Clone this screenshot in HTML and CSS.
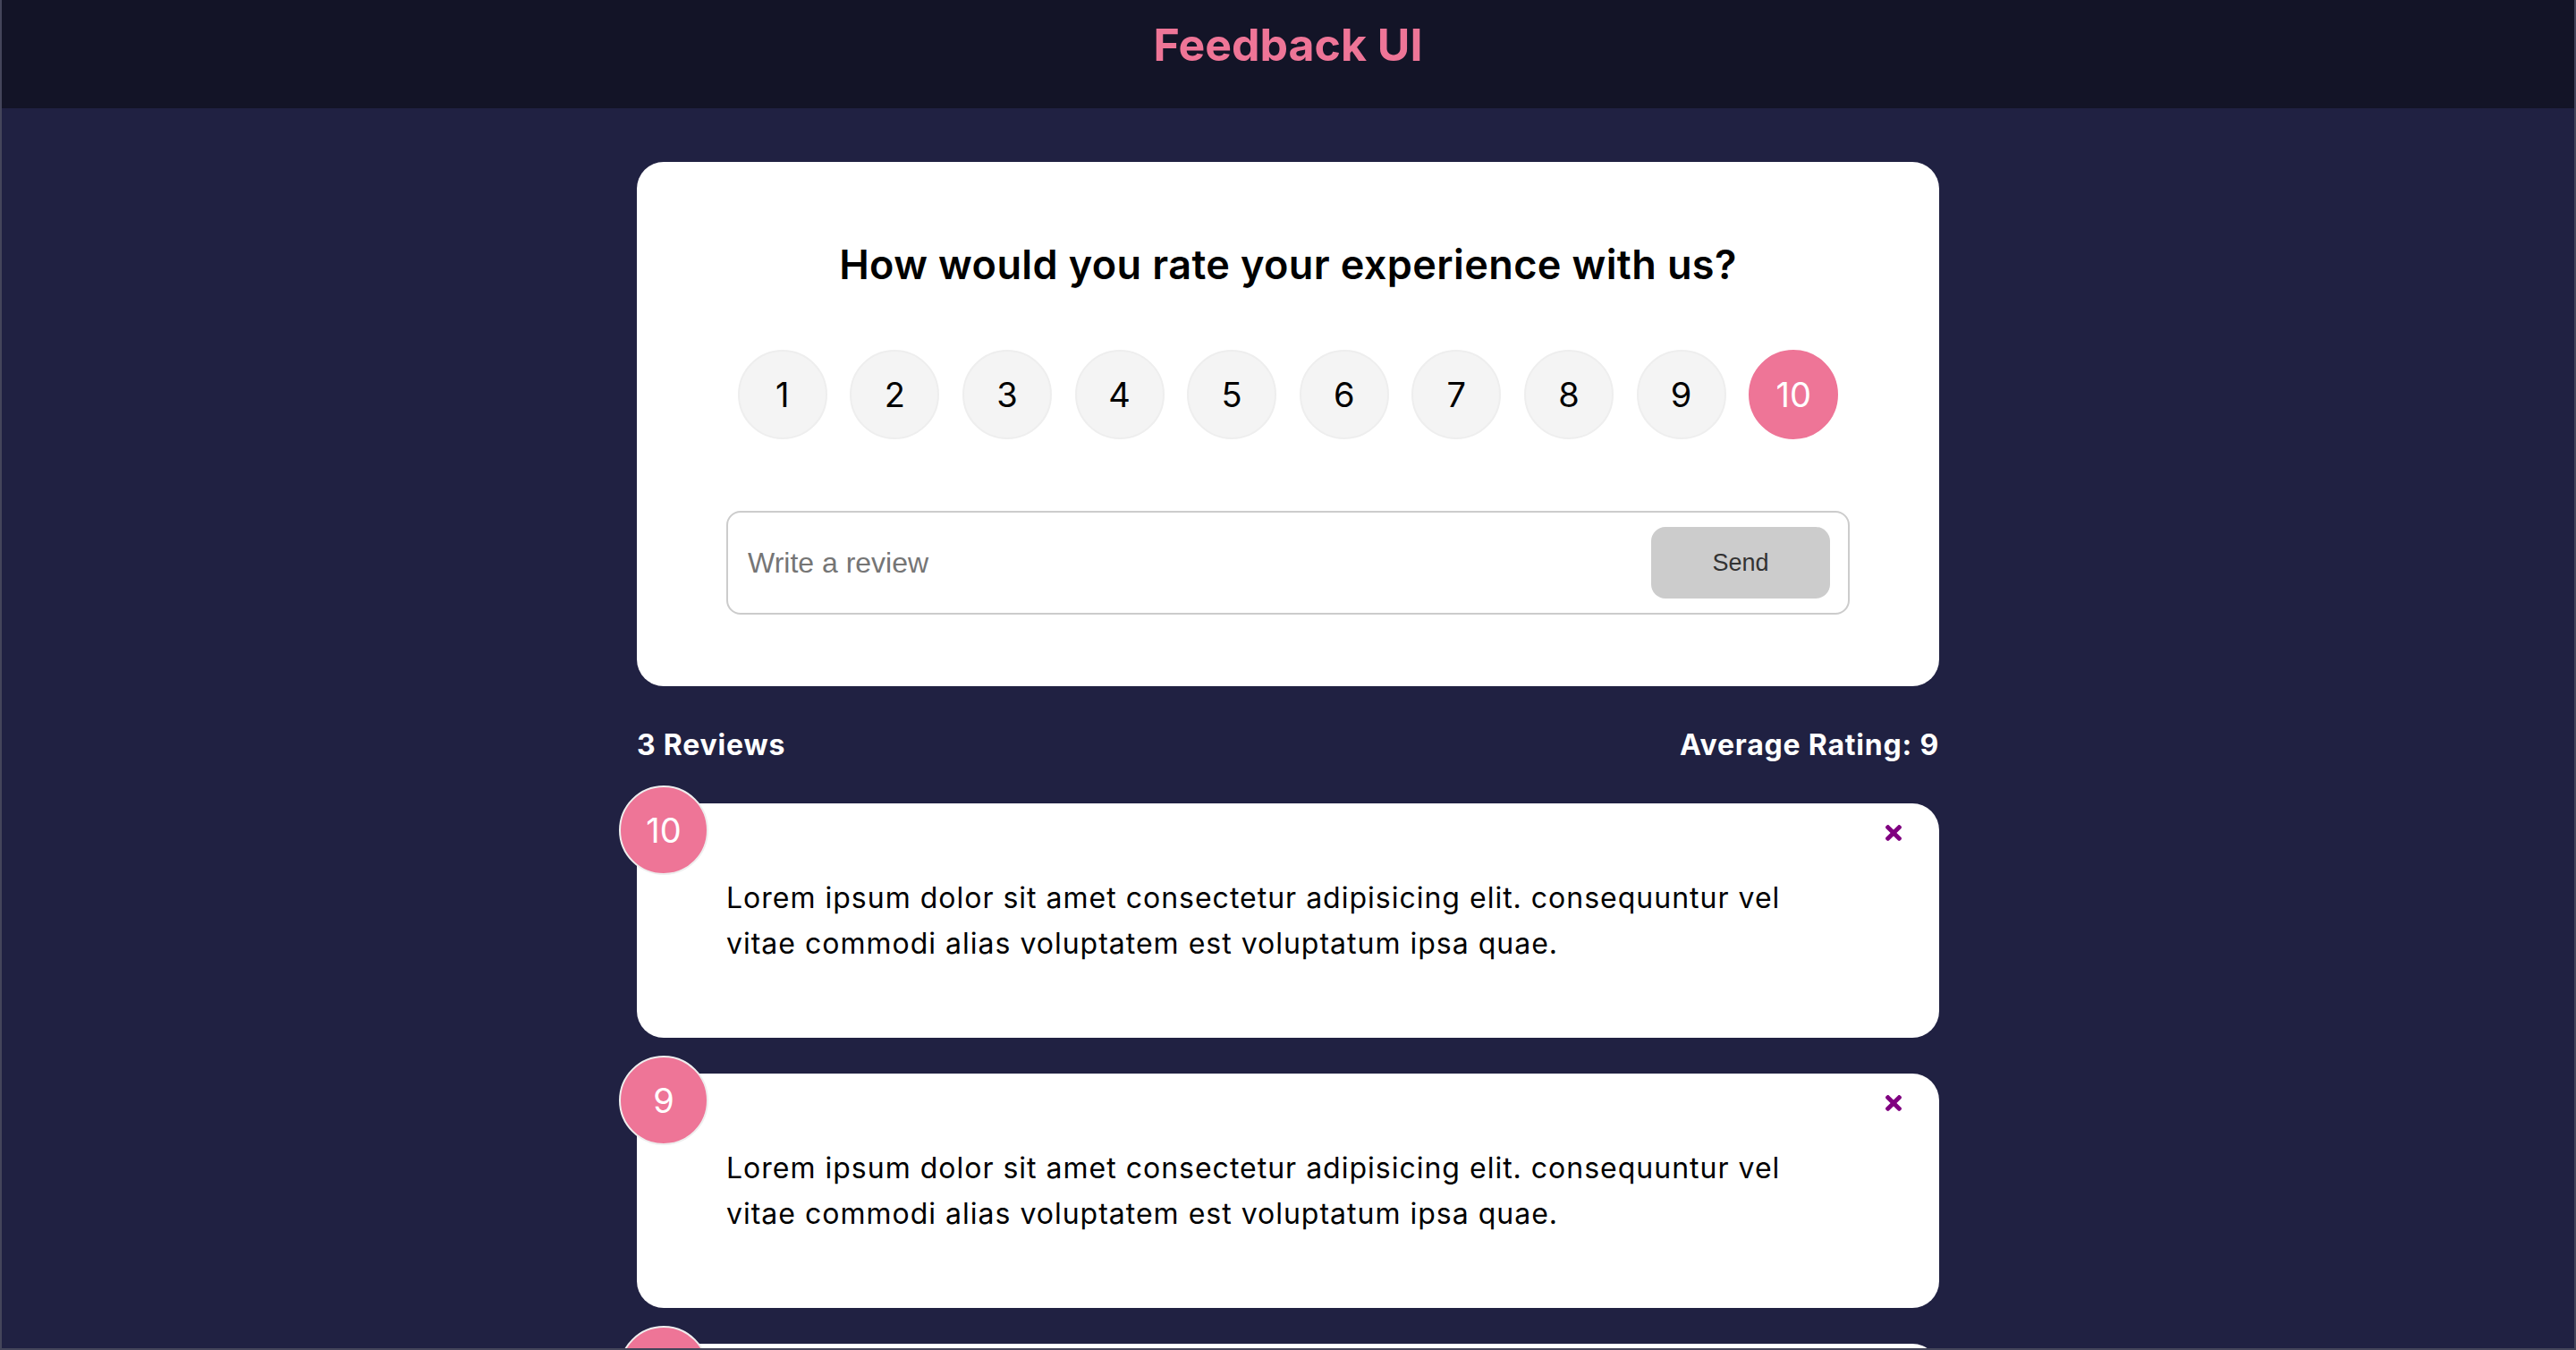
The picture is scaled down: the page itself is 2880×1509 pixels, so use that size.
FILE: index.html
```html
<!DOCTYPE html>
<html lang="en">
<head>
    <meta charset="UTF-8">
    <meta name="viewport" content="width=device-width, initial-scale=1.0">
    <title>Feedback UI</title>
    <link rel="stylesheet" href="styles.css">
</head>
<body>
    <div class="frame">
        <header class="topbar">
            <h2>Feedback UI</h2>
        </header>

        <main class="container">
            <!-- Rating form -->
            <div class="card">
                <form>
                    <h2 class="prompt">How would you rate your experience with us?</h2>
                    <ul class="rating">
                        <li>1</li>
                        <li>2</li>
                        <li>3</li>
                        <li>4</li>
                        <li>5</li>
                        <li>6</li>
                        <li>7</li>
                        <li>8</li>
                        <li>9</li>
                        <li class="selected">10</li>
                    </ul>
                    <div class="input-group">
                        <input type="text" placeholder="Write a review">
                        <button type="submit" class="btn" disabled>Send</button>
                    </div>
                </form>
            </div>

            <div class="stats">
                <h4>3 Reviews</h4>
                <h4>Average Rating: 9</h4>
            </div>

            <!-- Feedback list -->
            <div class="card review">
                <div class="num">10</div>
                <button class="close"><svg viewBox="0 80 352 352"><path d="M242.72 256l100.07-100.07c12.28-12.28 12.28-32.19 0-44.48l-22.24-22.24c-12.28-12.28-32.19-12.28-44.48 0L176 189.28 75.93 89.21c-12.28-12.28-32.19-12.28-44.48 0L9.21 111.45c-12.28 12.28-12.28 32.19 0 44.48L109.28 256 9.21 356.07c-12.28 12.28-12.28 32.19 0 44.48l22.24 22.24c12.28 12.28 32.2 12.28 44.48 0L176 322.72l100.07 100.07c12.28 12.28 32.2 12.28 44.48 0l22.24-22.24c12.28-12.28 12.28-32.19 0-44.48L242.72 256z"/></svg></button>
                <div class="text">Lorem ipsum dolor sit amet consectetur adipisicing elit. consequuntur vel vitae commodi alias voluptatem est voluptatum ipsa quae.</div>
            </div>
            <div class="card review">
                <div class="num">9</div>
                <button class="close"><svg viewBox="0 80 352 352"><path d="M242.72 256l100.07-100.07c12.28-12.28 12.28-32.19 0-44.48l-22.24-22.24c-12.28-12.28-32.19-12.28-44.48 0L176 189.28 75.93 89.21c-12.28-12.28-32.19-12.28-44.48 0L9.21 111.45c-12.28 12.28-12.28 32.19 0 44.48L109.28 256 9.21 356.07c-12.28 12.28-12.28 32.19 0 44.48l22.24 22.24c12.28 12.28 32.2 12.28 44.48 0L176 322.72l100.07 100.07c12.28 12.28 32.2 12.28 44.48 0l22.24-22.24c12.28-12.28 12.28-32.19 0-44.48L242.72 256z"/></svg></button>
                <div class="text">Lorem ipsum dolor sit amet consectetur adipisicing elit. consequuntur vel vitae commodi alias voluptatem est voluptatum ipsa quae.</div>
            </div>
            <div class="card review">
                <div class="num">8</div>
                <button class="close"><svg viewBox="0 80 352 352"><path d="M242.72 256l100.07-100.07c12.28-12.28 12.28-32.19 0-44.48l-22.24-22.24c-12.28-12.28-32.19-12.28-44.48 0L176 189.28 75.93 89.21c-12.28-12.28-32.19-12.28-44.48 0L9.21 111.45c-12.28 12.28-12.28 32.19 0 44.48L109.28 256 9.21 356.07c-12.28 12.28-12.28 32.19 0 44.48l22.24 22.24c12.28 12.28 32.2 12.28 44.48 0L176 322.72l100.07 100.07c12.28 12.28 32.2 12.28 44.48 0l22.24-22.24c12.28-12.28 12.28-32.19 0-44.48L242.72 256z"/></svg></button>
                <div class="text">Lorem ipsum dolor sit amet consectetur adipisicing elit. consequuntur vel vitae commodi alias voluptatem est voluptatum ipsa quae.</div>
            </div>
        </main>
    </div>
</body>
</html>
```

FILE: styles.css
```css
* {
    box-sizing: border-box;
}
body {
    margin: 0;
    font-family: Inter, "Noto Sans", sans-serif;
    background-color: #202142;
    color: #fff;
    line-height: 1.6;
}
.frame {
    height: 100vh;
    overflow: hidden;
    border: 2px solid #44455a;
    border-top: 0;
}
.topbar {
    height: 121px;
    background-color: #131427;
    text-align: center;
}
.topbar h2 {
    margin: 0;
    line-height: 100px;
    font-size: 50px;
    font-weight: 700;
    color: #ee7597;
}
.container {
    max-width: 1536px;
    margin: 0 auto;
    padding: 20px 40px 0;
}
.card {
    position: relative;
    background-color: #fff;
    color: #000;
    border-radius: 30px;
    padding: 80px 100px;
    margin: 40px 0;
}
.prompt {
    margin: 0;
    text-align: center;
    font-size: 45px;
    font-weight: 600;
    letter-spacing: 0.4px;
    line-height: 70px;
}
.rating {
    display: flex;
    align-items: center;
    justify-content: space-around;
    list-style: none;
    padding: 0;
    margin: 60px 0 80px;
}
.rating li {
    width: 100px;
    height: 100px;
    border-radius: 50%;
    background: #f4f4f4;
    border: 2px solid #eee;
    font-size: 38px;
    display: flex;
    align-items: center;
    justify-content: center;
}
.rating li.selected {
    background: #ee7597;
    border-color: #ee7597;
    color: #fff;
}
.input-group {
    display: flex;
    align-items: center;
    border: 2px solid #ccc;
    border-radius: 16px;
    padding: 16px 20px;
}
.input-group input {
    flex-grow: 1;
    border: none;
    outline: none;
    font-family: "Liberation Sans", Arial, sans-serif;
    font-size: 32px;
    padding: 1px 2px;
}
.input-group input::placeholder {
    color: #757575;
}
.btn {
    width: 200px;
    height: 80px;
    border: 0;
    border-radius: 16px;
    background-color: #ccc;
    color: #333;
    font-family: "Liberation Sans", Arial, sans-serif;
    font-size: 27px;
}
.stats {
    display: flex;
    justify-content: space-between;
    align-items: center;
    margin-top: 2px;
}
.stats h4 {
    margin: 0;
    font-size: 32px;
    font-weight: 700;
    letter-spacing: 0.8px;
    line-height: 51px;
}
.review .text {
    font-size: 32px;
    line-height: 51px;
    letter-spacing: 1px;
    max-width: 1200px;
}
.num {
    position: absolute;
    top: -20px;
    left: -20px;
    width: 100px;
    height: 100px;
    border-radius: 50%;
    background: #ee7597;
    border: 2px solid #eee;
    color: #fff;
    font-size: 38px;
    display: flex;
    align-items: center;
    justify-content: center;
}
.close {
    position: absolute;
    top: 24px;
    right: 42px;
    padding: 0;
    border: none;
    background: none;
    cursor: pointer;
}
.close svg {
    display: block;
    width: 18px;
    height: 18px;
    fill: #800080;
}
```
